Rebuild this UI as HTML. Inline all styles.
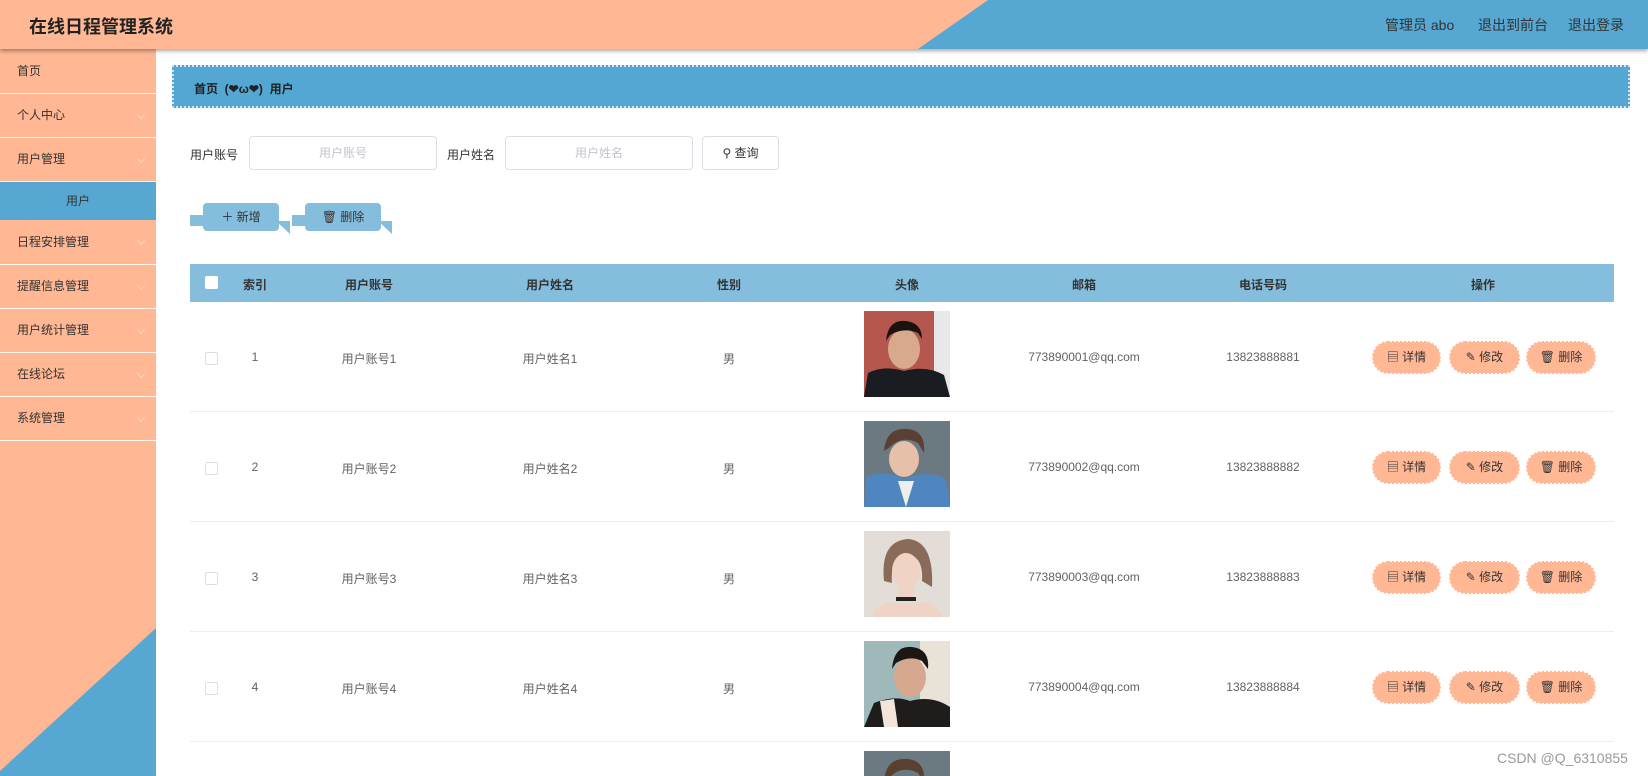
<!DOCTYPE html>
<html style="width:1648px;height:776px;overflow:hidden"><head><meta charset="utf-8"><style>
*{margin:0;padding:0;box-sizing:border-box}
body{width:1648px;height:776px;overflow:hidden;background:#fff;font-family:"Liberation Sans","Noto Sans CJK SC",sans-serif;color:#606266;position:relative}
.hdr{position:absolute;left:0;top:0;width:1648px;height:49px;background:#FFB794;box-shadow:0 2px 4px rgba(0,0,0,.35);z-index:3;overflow:hidden}
.hdr .blue{position:absolute;left:0;top:0;width:1648px;height:49px;background:#56A8D3;clip-path:polygon(988px 0,1648px 0,1648px 49px,918px 49px)}
.hdr .t{position:absolute;left:29px;top:13px;font-size:18px;font-weight:bold;color:#222}
.hdr .r{position:absolute;top:15px;font-size:14px;color:#333}
.side{position:absolute;left:0;top:49px;width:156px;height:727px;background:#FFB794;overflow:hidden}
.side .tri{position:absolute;left:0;top:0;width:156px;height:727px;background:#56A8D3;clip-path:polygon(156px 579px,156px 727px,0 727px,0 722px)}
.it{position:absolute;left:0;width:156px;font-size:12px;color:#333;padding-left:17px;border-bottom:1px solid #fff3ec}
.it .ch{position:absolute;right:12px;top:50%;width:6px;height:6px;border-right:1px solid #f7d6c6;border-bottom:1px solid #f7d6c6;transform:translateY(-70%) rotate(45deg)}
.bc{position:absolute;left:172px;top:65px;width:1458px;height:43px;background:#55A7D3;border:2px dotted #cfe6f2;font-size:12px;font-weight:bold;color:#222;padding:13px 0 0 20px}
.lbl{position:absolute;top:146px;font-size:12px;color:#333}
.inp{position:absolute;top:136px;height:34px;border:1px solid #dcdfe6;border-radius:4px;font-size:12px;color:#c0c4cc;text-align:center;line-height:32px}
.abtn{position:absolute;top:203px;width:76px;height:28px;background:#85BEDD;border-radius:4px;font-size:12px;color:#333;text-align:center;line-height:28px}
.tail{position:absolute;background:#85BEDD}
.th{position:absolute;left:190px;top:264px;width:1424px;height:38px;background:#85BEDD}
.c{position:absolute;transform:translateX(-50%);font-size:12px;white-space:nowrap}
.th .c{top:12px;font-weight:bold;color:#333}
.row{position:absolute;left:190px;width:1424px;height:110px;border-bottom:1px solid #ebeef5;overflow:hidden}
.row .c{top:48px;color:#606266}
.cb{position:absolute;width:13px;height:13px;border:1px solid #dcdfe6;border-radius:2px;background:#fff}
.op{position:absolute;top:40px;height:31px;background:#FFB794;border-radius:15px;font-size:12px;color:#333;line-height:31px;text-align:center;outline:2px dotted #FFB794;outline-offset:-1px}
.ph{position:absolute;left:674px;top:9px;width:86px;height:86px}
.wm{position:absolute;left:1497px;top:750px;font-size:14px;color:#999}
</style></head><body>
<div class="hdr"><div class="blue"></div><div class="t">在线日程管理系统</div>
<div class="r" style="left:1385px">管理员 abo</div><div class="r" style="left:1478px">退出到前台</div><div class="r" style="left:1568px">退出登录</div></div>
<div class="side"><div class="tri"></div>
<div class="it" style="top:0;height:45px;line-height:44px">首页</div>
<div class="it" style="top:45px;height:44px;line-height:43px">个人中心<span class="ch"></span></div>
<div class="it" style="top:89px;height:44px;line-height:43px">用户管理<span class="ch"></span></div>
<div class="it" style="top:133px;height:38px;line-height:38px;background:#56A8D3;padding:0;text-align:center;border:none">用户</div>
<div class="it" style="top:171px;height:45px;line-height:44px">日程安排管理<span class="ch"></span></div>
<div class="it" style="top:216px;height:44px;line-height:43px">提醒信息管理<span class="ch"></span></div>
<div class="it" style="top:260px;height:44px;line-height:43px">用户统计管理<span class="ch"></span></div>
<div class="it" style="top:304px;height:44px;line-height:43px">在线论坛<span class="ch"></span></div>
<div class="it" style="top:348px;height:44px;line-height:43px">系统管理<span class="ch"></span></div>
</div>
<div class="bc">首页 &nbsp;(❤ω❤) &nbsp;用户</div>
<div class="lbl" style="left:190px">用户账号</div>
<div class="inp" style="left:249px;width:188px">用户账号</div>
<div class="lbl" style="left:447px">用户姓名</div>
<div class="inp" style="left:505px;width:188px">用户姓名</div>
<div class="inp" style="left:702px;width:77px;color:#333">⚲ 查询</div>
<div class="tail" style="left:190px;top:215px;width:16px;height:11px"></div>
<div class="tail" style="left:276px;top:221px;width:14px;height:13px;clip-path:polygon(0 0,100% 0,100% 100%)"></div>
<div class="abtn" style="left:203px">＋ 新增</div>
<div class="tail" style="left:292px;top:215px;width:16px;height:11px"></div>
<div class="tail" style="left:378px;top:221px;width:14px;height:13px;clip-path:polygon(0 0,100% 0,100% 100%)"></div>
<div class="abtn" style="left:305px">🗑 删除</div>
<div class="th"><div class="cb" style="left:15px;top:12px;border-color:#fff"></div>
<div class="c" style="left:65px">索引</div><div class="c" style="left:179px">用户账号</div><div class="c" style="left:360px">用户姓名</div><div class="c" style="left:539px">性别</div><div class="c" style="left:717px">头像</div><div class="c" style="left:894px">邮箱</div><div class="c" style="left:1073px">电话号码</div><div class="c" style="left:1293px">操作</div></div>

<div class="row" style="top:302px"><div class="cb" style="left:15px;top:50px"></div>
<div class="c" style="left:65px">1</div><div class="c" style="left:179px">用户账号1</div><div class="c" style="left:360px">用户姓名1</div><div class="c" style="left:539px">男</div>
<svg class="ph" viewBox="0 0 86 86"><rect width="86" height="86" fill="#b5574e"/><rect x="70" width="16" height="86" fill="#e8e8e8"/><ellipse cx="40" cy="38" rx="16" ry="20" fill="#d9a98e"/><path d="M22 30Q24 8 42 10Q58 12 58 28L54 22Q40 16 26 24Z" fill="#1a1410"/><path d="M0 86L4 62Q20 54 40 60Q62 54 80 64L86 86Z" fill="#1b1b22"/></svg>
<div class="c" style="left:894px">773890001@qq.com</div><div class="c" style="left:1073px">13823888881</div>
<div class="op" style="left:1183px;width:67px">▤ 详情</div><div class="op" style="left:1260px;width:69px">✎ 修改</div><div class="op" style="left:1337px;width:68px">🗑 删除</div></div>

<div class="row" style="top:412px"><div class="cb" style="left:15px;top:50px"></div>
<div class="c" style="left:65px">2</div><div class="c" style="left:179px">用户账号2</div><div class="c" style="left:360px">用户姓名2</div><div class="c" style="left:539px">男</div>
<svg class="ph" viewBox="0 0 86 86"><rect width="86" height="86" fill="#6b7a80"/><ellipse cx="40" cy="38" rx="15" ry="18" fill="#e6c0a8"/><path d="M20 30Q22 6 44 8Q62 10 60 32L54 22Q38 14 26 26Z" fill="#5a4032"/><path d="M0 86L2 56Q20 48 40 58Q62 48 82 58L86 86Z" fill="#4f86bf"/><path d="M34 60L42 86L50 60Z" fill="#eee"/></svg>
<div class="c" style="left:894px">773890002@qq.com</div><div class="c" style="left:1073px">13823888882</div>
<div class="op" style="left:1183px;width:67px">▤ 详情</div><div class="op" style="left:1260px;width:69px">✎ 修改</div><div class="op" style="left:1337px;width:68px">🗑 删除</div></div>

<div class="row" style="top:522px"><div class="cb" style="left:15px;top:50px"></div>
<div class="c" style="left:65px">3</div><div class="c" style="left:179px">用户账号3</div><div class="c" style="left:360px">用户姓名3</div><div class="c" style="left:539px">男</div>
<svg class="ph" viewBox="0 0 86 86"><rect width="86" height="86" fill="#e2ddd6"/><path d="M20 50Q16 10 44 8Q70 10 68 56L58 50Q60 24 40 22Q26 30 28 52Z" fill="#8a6a58"/><ellipse cx="42" cy="40" rx="14" ry="18" fill="#efd3c4"/><rect x="34" y="56" width="16" height="14" fill="#efd3c4"/><rect x="32" y="66" width="20" height="4" fill="#222"/><path d="M8 86Q14 70 32 72L52 72Q72 70 78 86Z" fill="#efd3c4"/></svg>
<div class="c" style="left:894px">773890003@qq.com</div><div class="c" style="left:1073px">13823888883</div>
<div class="op" style="left:1183px;width:67px">▤ 详情</div><div class="op" style="left:1260px;width:69px">✎ 修改</div><div class="op" style="left:1337px;width:68px">🗑 删除</div></div>

<div class="row" style="top:632px"><div class="cb" style="left:15px;top:50px"></div>
<div class="c" style="left:65px">4</div><div class="c" style="left:179px">用户账号4</div><div class="c" style="left:360px">用户姓名4</div><div class="c" style="left:539px">男</div>
<svg class="ph" viewBox="0 0 86 86"><rect width="86" height="86" fill="#9fb8ba"/><rect x="56" width="30" height="86" fill="#e9e2d6"/><ellipse cx="46" cy="36" rx="16" ry="20" fill="#d6a890"/><path d="M28 28Q30 4 48 6Q66 8 64 28L58 20Q46 14 32 22Z" fill="#1d1713"/><path d="M0 86L10 62Q30 54 46 60Q68 54 86 66L86 86Z" fill="#1f1c1c"/><path d="M16 60L30 58L34 86L20 86Z" fill="#f2e6da"/></svg>
<div class="c" style="left:894px">773890004@qq.com</div><div class="c" style="left:1073px">13823888884</div>
<div class="op" style="left:1183px;width:67px">▤ 详情</div><div class="op" style="left:1260px;width:69px">✎ 修改</div><div class="op" style="left:1337px;width:68px">🗑 删除</div></div>

<div class="row" style="top:742px;height:34px;border:none">
<svg class="ph" viewBox="0 0 86 86"><rect width="86" height="86" fill="#6b7a80"/><path d="M20 30Q22 6 44 8Q62 10 60 32L54 22Q38 14 26 26Z" fill="#5a4032"/></svg></div>
<div class="wm">CSDN @Q_6310855</div>
</body></html>
